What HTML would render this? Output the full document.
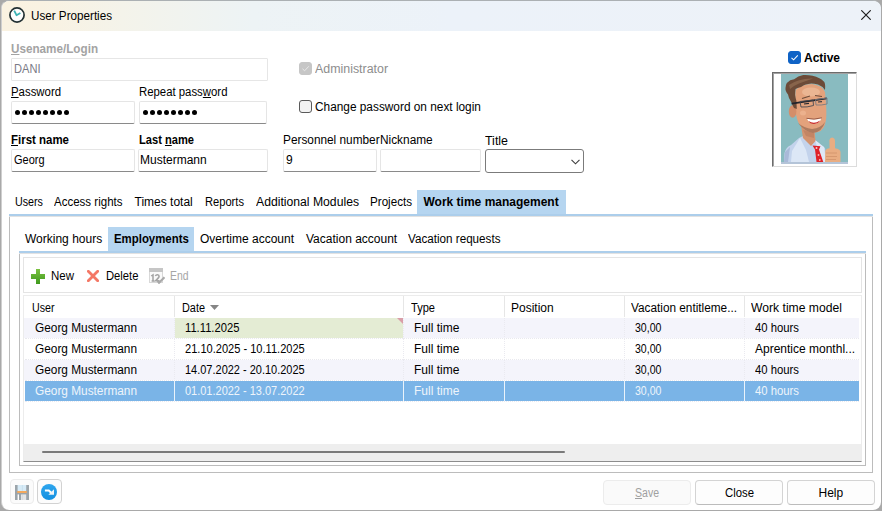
<!DOCTYPE html>
<html><head><meta charset="utf-8">
<style>
*{box-sizing:border-box;margin:0;padding:0}
html,body{width:882px;height:511px;overflow:hidden;background:#a9a9a9}
body{position:relative;font-family:"Liberation Sans",sans-serif;font-size:12px;color:#000}
.a{position:absolute;white-space:nowrap;line-height:14px;transform-origin:0 0}
.s{position:absolute}
.win{position:absolute;left:1px;top:0;width:880px;height:510px;background:#fff;border-radius:8px 8px 8px 8px;overflow:hidden}
.tb{position:absolute;background:#fff;border:1px solid #e5e5e5;border-bottom-color:#8a8a8a;border-radius:2px}
.u{text-decoration:underline}
.cb{position:absolute;width:13px;height:13px;border:1px solid #5a5a5a;border-radius:3px;background:#f3f3f3}
.dot{position:absolute;width:5px;height:5px;border-radius:50%;background:#000}
</style></head><body>
<div class="win" style="border-top:1px solid #abb0b3;border-left:1px solid #cfcfcf">
<div class="s" style="left:0;top:0;width:880px;height:30px;background:linear-gradient(90deg,#faf2e1 0px,#f9f2e2 40px,#f4f3ea 120px,#edf3f5 250px,#ecf2f9 450px,#edf2f8 880px)"></div>
</div>
<svg class="s" style="left:9px;top:7px" width="16" height="16" viewBox="0 0 16 16"><circle cx="8" cy="8" r="7.1" fill="#fdfdfd" stroke="#223033" stroke-width="1.7"/><path d="M5.2 3.6 L7.5 8.2 L11.4 6" fill="none" stroke="#3bb2b4" stroke-width="1.8" stroke-linejoin="round"/></svg>
<svg class="s" style="left:861px;top:10px" width="10" height="10" viewBox="0 0 10 10"><path d="M0.3 0.3 L9.7 9.7 M9.7 0.3 L0.3 9.7" stroke="#1c1c1c" stroke-width="1.15"/></svg>
<div class="tb" style="left:11px;top:58px;width:257px;height:23px;border-color:#e6e6e6;border-radius:1px;"></div>
<div class="tb" style="left:11px;top:101px;width:124px;height:23px;"></div>
<div class="tb" style="left:139px;top:101px;width:128px;height:23px;"></div>
<div class="tb" style="left:11px;top:149px;width:124px;height:23px;"></div>
<div class="tb" style="left:138px;top:149px;width:130px;height:23px;"></div>
<div class="tb" style="left:283px;top:149px;width:94px;height:23px;"></div>
<div class="tb" style="left:380px;top:149px;width:101px;height:23px;"></div>
<div class="s" style="left:485px;top:149px;width:99px;height:24px;border:1px solid #7b7b7b;border-radius:3px;background:#fff"></div>
<svg class="s" style="left:571px;top:159px" width="9" height="6" viewBox="0 0 9 6"><path d="M0.5 0.8 L4.5 4.8 L8.5 0.8" fill="none" stroke="#3c3c3c" stroke-width="1.1"/></svg>
<div class="dot" style="left:15px;top:110px"></div>
<div class="dot" style="left:22px;top:110px"></div>
<div class="dot" style="left:29px;top:110px"></div>
<div class="dot" style="left:36px;top:110px"></div>
<div class="dot" style="left:43px;top:110px"></div>
<div class="dot" style="left:50px;top:110px"></div>
<div class="dot" style="left:57px;top:110px"></div>
<div class="dot" style="left:64px;top:110px"></div>
<div class="dot" style="left:143px;top:110px"></div>
<div class="dot" style="left:150px;top:110px"></div>
<div class="dot" style="left:157px;top:110px"></div>
<div class="dot" style="left:164px;top:110px"></div>
<div class="dot" style="left:171px;top:110px"></div>
<div class="dot" style="left:178px;top:110px"></div>
<div class="dot" style="left:185px;top:110px"></div>
<div class="dot" style="left:192px;top:110px"></div>
<div class="cb" style="left:299px;top:62px;background:#c6c6c6;border-color:#c6c6c6"></div>
<svg class="s" style="left:301px;top:64px" width="9" height="9" viewBox="0 0 9 9"><path d="M1.5 4.8 L3.6 6.8 L7.8 2.3" fill="none" stroke="#e9e9e9" stroke-width="1"/></svg>
<div class="cb" style="left:299px;top:100px"></div>
<div class="cb" style="left:788px;top:51px;background:#0f63c6;border-color:#0f63c6"></div>
<svg class="s" style="left:790px;top:53px" width="9" height="9" viewBox="0 0 9 9"><path d="M1.5 4.8 L3.6 6.8 L7.8 2.3" fill="none" stroke="#fff" stroke-width="1.05"/></svg>
<div class="s" style="left:772px;top:72px;width:85px;height:95px;background:#fff;border-style:solid;border-width:1px;border-color:#6c6c6c #dcdcdc #dcdcdc #6c6c6c"></div>
<div class="s" style="left:773px;top:73px;width:83px;height:93px;border-style:solid;border-width:1px 0 0 1px;border-color:#a2a2a2"></div>
<svg class="s" style="left:781px;top:74px" width="67" height="90" viewBox="781 74 67 90">
<rect x="781" y="74" width="67" height="90" fill="#89bbc0"/>
<rect x="781" y="162" width="67" height="2" fill="#b4c4d8"/>
<path d="M784 162 L784.5 153 Q786 147 791 145 L799 138 L803 136 L815 140 L825 148 L827 162 Z" fill="#c3d3ec"/>
<path d="M791 162 L792 151 L800 138 L806 150 L809 162 Z" fill="#dce7f6"/>
<path d="M784 162 L785 152 L790 147 L788 162 Z" fill="#a9b9d8"/>
<path d="M815 140 L824 147 L826 162 L822 162 Z" fill="#dfe8f6"/>
<path d="M801 125 L814 126 L815.5 141 L811 146 L803 138 Z" fill="#d3936f"/>
<path d="M803 130 L814 132 L814 138 L806 136 Z" fill="#b97c5d" opacity="0.6"/>
<path d="M812.5 145.5 L820.5 146.2 L819 149.5 L823.3 162 L816.5 162 L815 149.5 Z" fill="#df2128"/>
<circle cx="816.5" cy="148" r="1" fill="#f7c9c9"/><circle cx="818.5" cy="155" r="0.9" fill="#f3b5b5"/><circle cx="819.8" cy="160" r="0.9" fill="#f3b5b5"/>
<path d="M795.5 90 Q801 84.5 812 84 Q822 85 825 92 L826 104 Q826.8 116 825.8 121 Q824.5 130 818 132 Q811 134 805 130 Q799 126 797 119 Q795 112 795 104 Z" fill="#e3a27c"/>
<ellipse cx="811" cy="92" rx="9" ry="4.5" fill="#efc29f" opacity="0.65"/>
<ellipse cx="803" cy="113" rx="3" ry="2.5" fill="#efb894" opacity="0.7"/>
<ellipse cx="792.6" cy="111.5" rx="3.8" ry="6.2" fill="#d48e6a"/>
<path d="M798 123 Q805 132 813 133 Q822 132 825 122 Q821 128 812 129 Q804 128 798 123 Z" fill="#9b6e55" opacity="0.75"/>
<path d="M807 118.7 Q814 120.5 821.3 118.3 Q820 123.5 814 123.5 Q809 123.5 807 118.7 Z" fill="#ffffff"/>
<path d="M808.5 121 Q814 124.8 820 120.6 Q818.5 123.8 814 124 Q810 124 808.5 121 Z" fill="#c92a2a"/>
<path d="M806.5 118.3 Q814 120.2 821.8 117.8" fill="none" stroke="#7a3b2e" stroke-width="0.7"/>
<path d="M803.2 75 Q812 74.5 819.4 78.2 Q824.4 81 824.8 83.2 Q825.6 86 825 90 Q822 86 818 84.6 Q812 83 808.2 83.9 Q803 85 801.1 87 Q797 88 795.5 89.1 Q795 93 795.1 95.1 Q795.5 98 796.4 100.8 L796.8 109 L794 108 Q792 104 791.3 102.2 Q788.5 98 788 94.4 Q785 91 785.5 88.1 Q785.6 85 786.8 83 Q790 79.5 794.1 79.2 Q798 76 803.2 75 Z" fill="#6c4b38"/>
<path d="M789 85 Q799 78 813 78.5 Q806 81 799 83.5 Q793 86 790 89 Z" fill="#9a7459" opacity="0.6"/>
<path d="M802 98.5 L810 96" stroke="#6d4c3a" stroke-width="1.2"/>
<path d="M815 95.5 L822 96.5" stroke="#6d4c3a" stroke-width="1.2"/>
<path d="M791.6 103.6 L826.8 98.3" stroke="#22242c" stroke-width="1.7"/>
<path d="M800 101.5 L813 100 L813.5 105.5 Q807 107.5 801 107 Z" fill="none" stroke="#4a4a50" stroke-width="0.9"/>
<path d="M815.5 99.5 L827 98 L827 104 Q821 105.5 816 105 Z" fill="none" stroke="#7a7a80" stroke-width="0.9"/>
<path d="M804 104 L809 103.3" stroke="#2a2a30" stroke-width="1.2"/>
<path d="M818 102 L822 101.6" stroke="#3a3a40" stroke-width="1.1"/>
<path d="M825 162 L825.2 151 Q826 148.6 829.6 148.3 L829.4 140 Q830.3 137.6 832.3 137.6 Q835 138.2 835 141 L835 148.3 Q840 149 840.5 152 L840.5 162 Z" fill="#e9ad82"/>
<path d="M826 153 L837 153 M826 156.5 L837 156.5 M826 159.5 L836 159.5" stroke="#c98a63" stroke-width="0.6"/>
</svg>
<div class="s" style="left:417px;top:190px;width:149px;height:24px;background:#b5d5f0"></div>
<div class="s" style="left:9px;top:214px;width:864px;height:259px;border:1px solid #bcbcbc;border-top:0"></div>
<div class="s" style="left:9px;top:214px;width:864px;height:2px;background:#acceeb"></div>
<div class="s" style="left:9px;top:216px;width:864px;height:1px;background:#e2e2e2"></div>
<div class="s" style="left:108px;top:227px;width:86px;height:24px;background:#b5d5f0"></div>
<div class="s" style="left:19px;top:251px;width:847px;height:215px;border:1px solid #bcbcbc;border-top:0"></div>
<div class="s" style="left:19px;top:251px;width:847px;height:2px;background:#acceeb"></div>
<div class="s" style="left:19px;top:253px;width:847px;height:1px;background:#e2e2e2"></div>
<div class="s" style="left:23px;top:257px;width:839px;height:36px;border:1px solid #e4e4e4"></div>
<svg class="s" style="left:31px;top:269px" width="14" height="15" viewBox="0 0 14 15"><defs><linearGradient id="gp" x1="0" y1="0" x2="0" y2="1"><stop offset="0" stop-color="#7cc242"/><stop offset="1" stop-color="#3f9a1e"/></linearGradient></defs><path d="M5 0 H9 V5 H14 V10 H9 V15 H5 V10 H0 V5 H5 Z" fill="url(#gp)"/></svg>
<svg class="s" style="left:87px;top:270px" width="12" height="12" viewBox="0 0 12 12"><path d="M1.3 1.3 L10.7 10.7 M10.7 1.3 L1.3 10.7" stroke="#f47866" stroke-width="2.8" stroke-linecap="round"/></svg>
<svg class="s" style="left:149px;top:268px" width="16" height="16" viewBox="0 0 16 16"><rect x="0.5" y="0.5" width="13" height="14" fill="#fafafa" stroke="#d8d8d8"/><rect x="0" y="0" width="14" height="4" fill="#c6c6c6"/><path d="M2.2 8 L4 6.8 V13 M2.6 13 H5.4" fill="none" stroke="#a4a4a4" stroke-width="1.5"/><path d="M6.3 8 Q7 6.6 8.5 6.7 Q10.2 6.9 10.1 8.5 Q9.8 10 6.5 12.8 H10.6" fill="none" stroke="#a4a4a4" stroke-width="1.5"/><path d="M8.3 12.5 L10 14.8 L15.5 9.3" fill="none" stroke="#a9a9a9" stroke-width="2.1"/></svg>
<div class="s" style="left:23px;top:295px;width:839px;height:167px;border:1px solid #ececec;border-bottom-color:#8d8d8d"></div>
<div class="s" style="left:174px;top:296px;width:1px;height:21px;background:#e6e6e6"></div>
<div class="s" style="left:403px;top:296px;width:1px;height:21px;background:#e6e6e6"></div>
<div class="s" style="left:504px;top:296px;width:1px;height:21px;background:#e6e6e6"></div>
<div class="s" style="left:624px;top:296px;width:1px;height:21px;background:#e6e6e6"></div>
<div class="s" style="left:744px;top:296px;width:1px;height:21px;background:#e6e6e6"></div>
<svg class="s" style="left:210px;top:305px" width="9" height="5" viewBox="0 0 9 5"><path d="M0 0 H9 L4.5 5 Z" fill="#858585"/></svg>
<div class="s" style="left:24px;top:318px;width:835px;height:20px;background:#f4f4fb"></div>
<div class="s" style="left:175px;top:318px;width:228px;height:20px;background:#e4ecd4"></div>
<svg class="s" style="left:397px;top:318px" width="6" height="6" viewBox="0 0 6 6"><path d="M0 0 H6 V6 Z" fill="#d99ea8"/></svg>
<div class="s" style="left:25px;top:338px;width:834px;height:1px;border-top:1px dotted #e9e9ef"></div>
<div class="s" style="left:174px;top:318px;width:1px;height:21px;border-left:1px dotted #eaeaf0"></div>
<div class="s" style="left:403px;top:318px;width:1px;height:21px;border-left:1px dotted #eaeaf0"></div>
<div class="s" style="left:504px;top:318px;width:1px;height:21px;border-left:1px dotted #eaeaf0"></div>
<div class="s" style="left:624px;top:318px;width:1px;height:21px;border-left:1px dotted #eaeaf0"></div>
<div class="s" style="left:744px;top:318px;width:1px;height:21px;border-left:1px dotted #eaeaf0"></div>
<div class="s" style="left:24px;top:339px;width:835px;height:20px;background:#ffffff"></div>
<div class="s" style="left:25px;top:359px;width:834px;height:1px;border-top:1px dotted #e9e9ef"></div>
<div class="s" style="left:174px;top:339px;width:1px;height:21px;border-left:1px dotted #eaeaf0"></div>
<div class="s" style="left:403px;top:339px;width:1px;height:21px;border-left:1px dotted #eaeaf0"></div>
<div class="s" style="left:504px;top:339px;width:1px;height:21px;border-left:1px dotted #eaeaf0"></div>
<div class="s" style="left:624px;top:339px;width:1px;height:21px;border-left:1px dotted #eaeaf0"></div>
<div class="s" style="left:744px;top:339px;width:1px;height:21px;border-left:1px dotted #eaeaf0"></div>
<div class="s" style="left:24px;top:360px;width:835px;height:20px;background:#f4f4fb"></div>
<div class="s" style="left:25px;top:380px;width:834px;height:1px;border-top:1px dotted #e9e9ef"></div>
<div class="s" style="left:174px;top:360px;width:1px;height:21px;border-left:1px dotted #eaeaf0"></div>
<div class="s" style="left:403px;top:360px;width:1px;height:21px;border-left:1px dotted #eaeaf0"></div>
<div class="s" style="left:504px;top:360px;width:1px;height:21px;border-left:1px dotted #eaeaf0"></div>
<div class="s" style="left:624px;top:360px;width:1px;height:21px;border-left:1px dotted #eaeaf0"></div>
<div class="s" style="left:744px;top:360px;width:1px;height:21px;border-left:1px dotted #eaeaf0"></div>
<div class="s" style="left:25px;top:381px;width:834px;height:20px;background:#7ab4e7"></div>
<div class="s" style="left:25px;top:401px;width:834px;height:1px;border-top:1px dotted #e9e9ef"></div>
<div class="s" style="left:174px;top:381px;width:1px;height:20px;background:#eaf3fb"></div>
<div class="s" style="left:403px;top:381px;width:1px;height:20px;background:#eaf3fb"></div>
<div class="s" style="left:504px;top:381px;width:1px;height:20px;background:#eaf3fb"></div>
<div class="s" style="left:624px;top:381px;width:1px;height:20px;background:#eaf3fb"></div>
<div class="s" style="left:744px;top:381px;width:1px;height:20px;background:#eaf3fb"></div>
<div class="s" style="left:24px;top:444px;width:837px;height:17px;background:#eeeeee"></div>
<div class="s" style="left:42px;top:451px;width:523px;height:2px;background:#7a7a7a;border-radius:1px"></div>
<div class="s" style="left:10px;top:479px;width:24px;height:25px;border:1px solid #ececec;border-radius:4px;background:#fbfbfb"></div>
<svg class="s" style="left:15px;top:485px" width="14" height="15" viewBox="0 0 14 15"><rect x="0" y="0" width="14" height="15" fill="#9ba4aa"/><rect x="2.6" y="0" width="8.6" height="6" fill="#d7ebf7"/><rect x="6.9" y="0" width="0.7" height="6" fill="#c2dbea"/><rect x="2.2" y="6" width="9.6" height="2" fill="#f3a95e"/><rect x="2.6" y="9.4" width="1.4" height="5.6" fill="#ffffff"/><rect x="6.3" y="9.4" width="1.2" height="5.6" fill="#ffffff"/><rect x="7.5" y="9.4" width="3.7" height="5.6" fill="#e4e6e8"/></svg>
<div class="s" style="left:37px;top:479px;width:25px;height:25px;border:1px solid #d2d2d2;border-radius:4px;background:#fcfcfc"></div>
<svg class="s" style="left:41px;top:484px" width="16" height="16" viewBox="0 0 16 16"><defs><linearGradient id="gr" x1="0" y1="0" x2="0" y2="1"><stop offset="0" stop-color="#2ea6ee"/><stop offset="1" stop-color="#1590e0"/></linearGradient></defs><circle cx="8" cy="8" r="8" fill="url(#gr)"/><path d="M3.9 5.4 H8.2 L10.9 8.1 L9.4 9.6 L7.4 7.6 H3.9 Z" fill="#fff"/><path d="M13 5.2 V10.8 H7.3 Z" fill="#eef3f7"/></svg>
<div class="s" style="left:603px;top:480px;width:88px;height:25px;border:1px solid #ececec;border-radius:4px;background:#fafafa"></div>
<div class="s" style="left:695px;top:480px;width:88px;height:25px;border:1px solid #d4d4d4;border-bottom-color:#bcbcbc;border-radius:4px;background:#fdfdfd"></div>
<div class="s" style="left:787px;top:480px;width:88px;height:25px;border:1px solid #d4d4d4;border-bottom-color:#bcbcbc;border-radius:4px;background:#fdfdfd"></div>
<div class="a" style="left:31px;top:9px;transform:scaleX(0.972);">User Properties</div>
<div class="a" style="left:11px;top:42px;font-weight:bold;color:#a3a3a3;transform:scaleX(0.974);"><span class="u">U</span>sename/Login</div>
<div class="a" style="left:14px;top:62px;color:#7a7a86;transform:scaleX(0.924);">DANI</div>
<div class="a" style="left:11px;top:85px;transform:scaleX(0.949);"><span class="u">P</span>assword</div>
<div class="a" style="left:139px;top:85px;transform:scaleX(0.947);">Repeat pass<span class="u">w</span>ord</div>
<div class="a" style="left:11px;top:133px;font-weight:bold;transform:scaleX(0.955);"><span class="u">F</span>irst name</div>
<div class="a" style="left:139px;top:133px;font-weight:bold;transform:scaleX(0.926);">Last <span class="u">n</span>ame</div>
<div class="a" style="left:14px;top:153px;transform:scaleX(0.914);">Georg</div>
<div class="a" style="left:140px;top:153px;">Mustermann</div>
<div class="a" style="left:315px;top:62px;color:#8d8d8d;transform:scaleX(1.033);">Administrator</div>
<div class="a" style="left:315px;top:100px;transform:scaleX(0.987);">Change password on next login</div>
<div class="a" style="left:283px;top:133px;transform:scaleX(0.985);">Personnel number</div>
<div class="a" style="left:380px;top:133px;transform:scaleX(0.988);">Nickname</div>
<div class="a" style="left:484.5px;top:134px;transform:scaleX(1.034);">Title</div>
<div class="a" style="left:286px;top:153px;">9</div>
<div class="a" style="left:804px;top:51px;font-weight:bold;">Active</div>
<div class="a" style="left:15px;top:195px;transform:scaleX(0.893);">Users</div>
<div class="a" style="left:54px;top:195px;transform:scaleX(0.960);">Access rights</div>
<div class="a" style="left:134.5px;top:195px;">Times total</div>
<div class="a" style="left:204.5px;top:195px;transform:scaleX(0.928);">Reports</div>
<div class="a" style="left:255.5px;top:195px;transform:scaleX(1.016);">Additional Modules</div>
<div class="a" style="left:370px;top:195px;transform:scaleX(0.969);">Projects</div>
<div class="a" style="left:423.5px;top:195px;font-weight:bold;">Work time management</div>
<div class="a" style="left:25px;top:232px;">Working hours</div>
<div class="a" style="left:113.5px;top:232px;font-weight:bold;transform:scaleX(0.951);">Employments</div>
<div class="a" style="left:200px;top:232px;">Overtime account</div>
<div class="a" style="left:306px;top:232px;">Vacation account</div>
<div class="a" style="left:407.5px;top:232px;transform:scaleX(0.972);">Vacation requests</div>
<div class="a" style="left:50.5px;top:269px;transform:scaleX(0.958);">New</div>
<div class="a" style="left:105.5px;top:269px;transform:scaleX(0.937);">Delete</div>
<div class="a" style="left:169.5px;top:269px;color:#a6a6a6;transform:scaleX(0.866);">End</div>
<div class="a" style="left:31.5px;top:301px;transform:scaleX(0.888);">User</div>
<div class="a" style="left:181.5px;top:301px;transform:scaleX(0.907);">Date</div>
<div class="a" style="left:410.5px;top:301px;transform:scaleX(0.923);">Type</div>
<div class="a" style="left:511px;top:301px;">Position</div>
<div class="a" style="left:631px;top:301px;transform:scaleX(0.983);">Vacation entitleme...</div>
<div class="a" style="left:751px;top:301px;transform:scaleX(1.013);">Work time model</div>
<div class="a" style="left:35px;top:321px;transform:scaleX(0.987);">Georg Mustermann</div>
<div class="a" style="left:185px;top:321px;transform:scaleX(0.933);">11.11.2025</div>
<div class="a" style="left:414px;top:321px;">Full time</div>
<div class="a" style="left:635px;top:321px;transform:scaleX(0.879);">30,00</div>
<div class="a" style="left:755px;top:321px;transform:scaleX(0.942);">40 hours</div>
<div class="a" style="left:35px;top:342px;transform:scaleX(0.987);">Georg Mustermann</div>
<div class="a" style="left:185px;top:342px;transform:scaleX(0.922);">21.10.2025 - 10.11.2025</div>
<div class="a" style="left:414px;top:342px;">Full time</div>
<div class="a" style="left:635px;top:342px;transform:scaleX(0.879);">30,00</div>
<div class="a" style="left:755px;top:342px;">Aprentice monthl...</div>
<div class="a" style="left:35px;top:363px;transform:scaleX(0.987);">Georg Mustermann</div>
<div class="a" style="left:185px;top:363px;transform:scaleX(0.915);">14.07.2022 - 20.10.2025</div>
<div class="a" style="left:414px;top:363px;">Full time</div>
<div class="a" style="left:635px;top:363px;transform:scaleX(0.879);">30,00</div>
<div class="a" style="left:755px;top:363px;transform:scaleX(0.942);">40 hours</div>
<div class="a" style="left:35px;top:384px;color:#eef4fb;transform:scaleX(0.987);">Georg Mustermann</div>
<div class="a" style="left:185px;top:384px;color:#eef4fb;transform:scaleX(0.915);">01.01.2022 - 13.07.2022</div>
<div class="a" style="left:414px;top:384px;color:#eef4fb;">Full time</div>
<div class="a" style="left:635px;top:384px;color:#eef4fb;transform:scaleX(0.879);">30,00</div>
<div class="a" style="left:755px;top:384px;color:#eef4fb;transform:scaleX(0.942);">40 hours</div>
<div class="a" style="left:635px;top:486px;color:#a0a0a0;transform:scaleX(0.877);"><span class="u">S</span>ave</div>
<div class="a" style="left:724.5px;top:486px;transform:scaleX(0.945);">Close</div>
<div class="a" style="left:818.5px;top:486px;">Help</div>
</body></html>
